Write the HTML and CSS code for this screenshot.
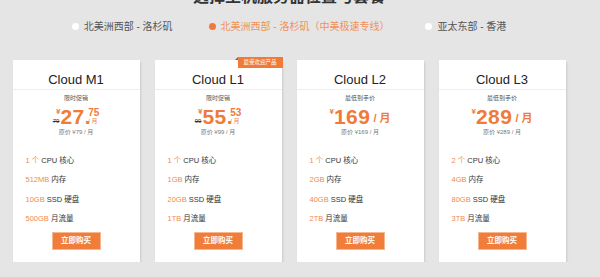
FILE: index.html
```html
<!DOCTYPE html>
<html lang="zh-CN">
<head>
  <meta charset="UTF-8">
  <title>选择主机服务器位置与套餐</title>
  <link rel="stylesheet" href="styles.css">
</head>
<body>
  <div class="page">
    <h1 class="title">选择主机服务器位置与套餐</h1>

    <div class="regions">
      <label class="region"><span class="dot"></span>北美洲西部 - 洛杉矶</label>
      <label class="region active"><span class="dot"></span>北美洲西部 - 洛杉矶（中美极速专线）</label>
      <label class="region"><span class="dot"></span>亚太东部 - 香港</label>
    </div>

    <div class="plans">
      <div class="plan">
        <div class="plan-name">Cloud M1</div>
        <div class="plan-tag">限时促销</div>
        <div class="price">
          <span class="side"><span class="cur">¥</span><s class="old">79</s></span>
          <span class="big">27<span class="pt">.</span></span>
          <span class="side right"><span class="cents">75</span><span class="per">/ 月</span></span>
        </div>
        <div class="orig">原价 ¥79 / 月</div>
        <ul class="specs">
          <li><em>1 个</em> CPU 核心</li>
          <li><em>512MB</em> 内存</li>
          <li><em>10GB</em> SSD 硬盘</li>
          <li><em>500GB</em> 月流量</li>
        </ul>
        <a class="buy" href="#">立即购买</a>
      </div>

      <div class="plan">
        <span class="badge">最受欢迎产品</span>
        <div class="plan-name">Cloud L1</div>
        <div class="plan-tag">限时促销</div>
        <div class="price">
          <span class="side"><span class="cur">¥</span><s class="old">99</s></span>
          <span class="big">55<span class="pt">.</span></span>
          <span class="side right"><span class="cents">53</span><span class="per">/ 月</span></span>
        </div>
        <div class="orig">原价 ¥99 / 月</div>
        <ul class="specs">
          <li><em>1 个</em> CPU 核心</li>
          <li><em>1GB</em> 内存</li>
          <li><em>20GB</em> SSD 硬盘</li>
          <li><em>1TB</em> 月流量</li>
        </ul>
        <a class="buy" href="#">立即购买</a>
      </div>

      <div class="plan">
        <div class="plan-name">Cloud L2</div>
        <div class="plan-tag">最低到手价</div>
        <div class="price">
          <span class="side"><span class="cur">¥</span></span>
          <span class="big">169</span>
          <span class="month">/ 月</span>
        </div>
        <div class="orig">原价 ¥169 / 月</div>
        <ul class="specs">
          <li><em>1 个</em> CPU 核心</li>
          <li><em>2GB</em> 内存</li>
          <li><em>40GB</em> SSD 硬盘</li>
          <li><em>2TB</em> 月流量</li>
        </ul>
        <a class="buy" href="#">立即购买</a>
      </div>

      <div class="plan">
        <div class="plan-name">Cloud L3</div>
        <div class="plan-tag">最低到手价</div>
        <div class="price">
          <span class="side"><span class="cur">¥</span></span>
          <span class="big">289</span>
          <span class="month">/ 月</span>
        </div>
        <div class="orig">原价 ¥289 / 月</div>
        <ul class="specs">
          <li><em>2 个</em> CPU 核心</li>
          <li><em>4GB</em> 内存</li>
          <li><em>80GB</em> SSD 硬盘</li>
          <li><em>3TB</em> 月流量</li>
        </ul>
        <a class="buy" href="#">立即购买</a>
      </div>
    </div>
  </div>
</body>
</html>
```

FILE: styles.css
```css
body { margin: 0; background: #e5e5e5; font-family: "Liberation Sans", "Noto Sans CJK SC", sans-serif; color: #333; overflow: hidden; }
.page { width: 578px; }

.title { margin: -11px 0 0; font-size: 16px; line-height: 16px; font-weight: bold; text-align: center; color: #333; }

.regions { display: flex; justify-content: center; gap: 36px; margin-top: 15.5px; font-size: 10px; line-height: 12px; color: #555; }
.region { display: flex; align-items: center; gap: 5px; }
.dot { width: 7px; height: 7px; border-radius: 50%; background: #fff; }
.region.active { color: #f09158; }
.region.active .dot { background: #f07b38; }

.plans { display: flex; justify-content: center; gap: 15px; margin-top: 27.5px; }
.plan { position: relative; width: 127px; height: 202px; background: #fff; box-shadow: 1px 2px 2px rgba(0, 0, 0, 0.12); text-align: center; }

.badge { position: absolute; top: -3px; right: -1px; width: 45px; height: 11px; background: #f07b38; color: #fff; font-size: 5.5px; line-height: 11px; }
.badge::before { content: ""; position: absolute; left: -3px; top: 0; border-bottom: 3px solid #b65420; border-left: 3px solid transparent; }

.plan-name { padding-top: 11px; line-height: 18px; font-size: 13px; border-bottom: 1px solid #eee; color: #222; }
.plan-tag { margin-top: 3px; line-height: 10px; font-size: 6px; color: #555; }

.price { display: flex; justify-content: center; margin-top: 5px; height: 17px; color: #f07b38; }
.side { display: flex; flex-direction: column; justify-content: space-between; align-items: flex-end; }
.side.right { align-items: flex-start; }
.cur { font-size: 8px; line-height: 8px; font-weight: bold; }
.old { font-size: 6px; line-height: 7px; color: #333; margin-right: 1px; }
.big { font-size: 21px; line-height: 17px; font-weight: bold; letter-spacing: 0.5px; }
.pt { letter-spacing: -2.5px; }
.cents { font-size: 10px; line-height: 9px; font-weight: bold; }
.per { font-size: 6px; line-height: 7px; }
.month { align-self: flex-end; margin-left: 3px; font-size: 11px; line-height: 13px; font-weight: bold; }

.orig { margin-top: 3px; line-height: 8px; font-size: 6px; color: #777; }

.specs { list-style: none; margin: 14.75px 0 0; padding: 0 0 0 13px; text-align: left; font-size: 7.5px; }
.specs li { height: 19.5px; line-height: 19.5px; }
.specs em { font-style: normal; color: #f08a4b; }

.buy { display: block; width: 47px; height: 16px; margin: 2.75px auto 0; background: #f07d3a; border: 1px solid #f6b791; color: #fff; font-size: 7.5px; line-height: 16px; font-weight: bold; text-decoration: none; }
```
